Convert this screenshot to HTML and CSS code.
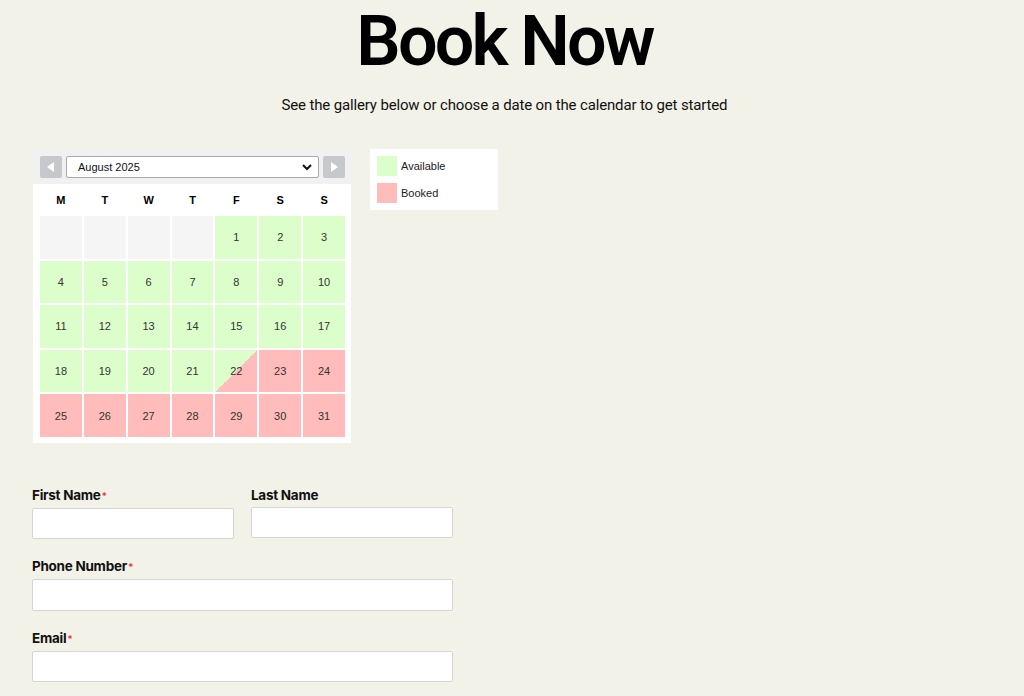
FILE: index.html
```html
<!DOCTYPE html>
<html lang="en">
<head>
  <meta charset="UTF-8" />
  <title>Book Now</title>
  <link rel="stylesheet" href="styles.css">
</head>
<body>

<div class="page">
  <div class="intro">
    <h1 class="title">Book Now</h1>
    <p class="subtitle">See the gallery below or choose a date on the calendar to get started</p>
  </div>

  <div class="booking-row">
    <!-- Calendar -->
    <div class="calendar">
      <div class="cal-head">
        <button class="cal-nav" aria-label="Previous month">
          <svg width="8" height="10" viewBox="0 0 8 10"><path d="M7 0 L0 5 L7 10 Z" fill="#fff"/></svg>
        </button>
        <div class="cal-select">
          <select>
            <option>August 2025</option>
          </select>
          <svg class="chevron" width="10" height="7" viewBox="0 0 10 7"><path d="M1 1 L5 5 L9 1" fill="none" stroke="#111" stroke-width="2"/></svg>
        </div>
        <button class="cal-nav" aria-label="Next month">
          <svg width="8" height="10" viewBox="0 0 8 10"><path d="M1 0 L8 5 L1 10 Z" fill="#fff"/></svg>
        </button>
      </div>

      <div class="cal-body">
        <div class="cal-days">
          <span>M</span><span>T</span><span>W</span><span>T</span><span>F</span><span>S</span><span>S</span>
        </div>
        <div class="cal-grid" id="grid"></div>
      </div>
    </div>

    <!-- Legenda -->
    <div class="legend">
      <div class="legend-item"><span class="swatch free"></span>Available</div>
      <div class="legend-item"><span class="swatch booked"></span>Booked</div>
    </div>
  </div>

  <form class="form">
    <div class="form-row">
      <div class="field">
        <label>First Name<span class="req">*</span></label>
        <input type="text">
      </div>
      <div class="field">
        <label>Last Name</label>
        <input type="text">
      </div>
    </div>
    <div class="field">
      <label>Phone Number<span class="req">*</span></label>
      <input type="tel">
    </div>
    <div class="field">
      <label>Email<span class="req">*</span></label>
      <input type="email">
    </div>
  </form>
</div>

<script>
  const grid = document.getElementById("grid");

  // agosto 2025 começa numa sexta
  for (let i = 0; i < 4; i++) {
    const c = document.createElement("div");
    c.className = "cell empty";
    grid.appendChild(c);
  }

  for (let d = 1; d <= 31; d++) {
    const c = document.createElement("div");
    c.className = "cell";
    if (d < 22) c.classList.add("free");
    else if (d === 22) c.classList.add("half");
    else c.classList.add("booked");
    c.innerText = d;
    grid.appendChild(c);
  }
</script>

</body>
</html>
```

FILE: styles.css
```css
* {
  margin: 0;
  padding: 0;
  box-sizing: border-box;
}

body {
  background: #f3f2e8;
  font-family: Roboto, sans-serif;
  color: #111;
}

.page {
  padding: 0 32px;
}

.intro {
  margin-right: 15px;
  text-align: center;
}

.title {
  margin-top: 1px;
  font-size: 70px;
  line-height: 80px;
  font-weight: 600;
  letter-spacing: -0.04em;
  color: #000;
}

.subtitle {
  margin-top: 14px;
  font-size: 15px;
  line-height: 20px;
  letter-spacing: -0.15px;
  color: #111;
}

.booking-row {
  display: flex;
  align-items: flex-start;
  gap: 19px;
  margin-top: 34px;
  margin-left: 1px;
}

/* calendario */
.calendar {
  width: 318px;
  background: #fff;
  font-family: "Liberation Sans", Arial, sans-serif;
}

.cal-head {
  display: flex;
  align-items: center;
  gap: 4px;
  height: 35px;
  padding: 0 6px 0 7px;
  background: #f1f1f1;
}

.cal-nav {
  width: 22px;
  height: 22px;
  border: none;
  border-radius: 2px;
  background: #c6c8cb;
  display: flex;
  align-items: center;
  justify-content: center;
}

.cal-select {
  position: relative;
  flex: 1;
}

.cal-select select {
  width: 100%;
  height: 22px;
  appearance: none;
  border: 1px solid #a9a9a9;
  border-radius: 2px;
  background: #fff;
  padding-left: 11px;
  font-family: "Liberation Sans", Arial, sans-serif;
  font-size: 11px;
  color: #111;
}

.cal-select .chevron {
  position: absolute;
  right: 7px;
  top: 8px;
}

.cal-body {
  padding: 0 6px 6px 7px;
}

.cal-days {
  display: grid;
  grid-template-columns: repeat(7, 1fr);
  gap: 2px;
  height: 32px;
  align-items: center;
  font-size: 11px;
  font-weight: bold;
  text-align: center;
  color: #000;
}

.cal-grid {
  display: grid;
  grid-template-columns: repeat(7, 1fr);
  grid-auto-rows: 42.6px;
  gap: 2px;
}

.cell {
  display: flex;
  align-items: center;
  justify-content: center;
  font-size: 11px;
  color: #333;
}

.cell.empty {
  background: #f5f5f5;
}

.cell.free {
  background: #dcfecb;
}

.cell.booked {
  background: #ffbcbb;
}

.cell.half {
  background: linear-gradient(to bottom right, #dcfecb 50%, #ffbcbb 50%);
}

/* legenda */
.legend {
  width: 128px;
  background: #fff;
  padding: 7px;
  display: flex;
  flex-direction: column;
  gap: 7px;
  font-family: "Liberation Sans", Arial, sans-serif;
  font-size: 11px;
  color: #222;
}

.legend-item {
  display: flex;
  align-items: center;
  gap: 4px;
}

.swatch {
  width: 20px;
  height: 20px;
}

.swatch.free {
  background: #dcfecb;
}

.swatch.booked {
  background: #ffbcbb;
}

/* formulario */
.form {
  width: 421px;
  margin-top: 42px;
  display: flex;
  flex-direction: column;
  gap: 17px;
  font-family: Inter, sans-serif;
}

.form-row {
  display: flex;
  gap: 17px;
}

.form-row .field {
  flex: 1;
}

.field {
  display: flex;
  flex-direction: column;
}

.field label {
  font-size: 13.5px;
  line-height: 20px;
  font-weight: 700;
  letter-spacing: -0.02em;
  color: #111;
  margin-bottom: 2px;
}

.req {
  color: #e8402f;
  font-size: 10px;
  margin-left: 1px;
}

.field input {
  height: 31.5px;
  border: 1px solid #d5d5d5;
  border-radius: 2px;
  background: #fff;
}
```
